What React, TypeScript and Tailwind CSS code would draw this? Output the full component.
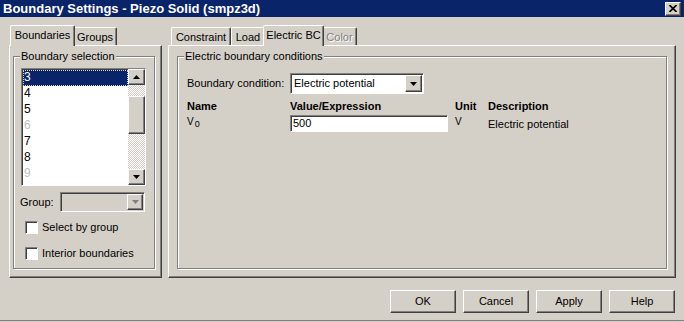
import React from 'react';

const raised =
  'border border-t-white border-l-white border-r-[#404040] border-b-[#404040] shadow-[inset_-1px_-1px_#808080] bg-[#d4d0c8]';
const sunken =
  'border border-t-[#808080] border-l-[#808080] border-r-white border-b-white shadow-[inset_1px_1px_#404040]';

const Down = () => (
  <svg width="7" height="4" viewBox="0 0 7 4">
    <polygon points="0,0 7,0 3.5,4" fill="#000" />
  </svg>
);

const Up = () => (
  <svg width="7" height="4" viewBox="0 0 7 4">
    <polygon points="0,4 7,4 3.5,0" fill="#000" />
  </svg>
);

const GroupBox: React.FC<{ label: string; className?: string; children?: React.ReactNode }> = ({
  label,
  className,
  children
}) => (
  <div
    className={`relative border border-[#808080] shadow-[inset_1px_1px_#fff,1px_1px_#fff] ${className ?? ''}`}
  >
    <span className="absolute -top-[8px] left-[6px] bg-[#d4d0c8] px-[1px] leading-[14px]">{label}</span>
    {children}
  </div>
);

const Tab: React.FC<{ label: string; width: string; active?: boolean; disabled?: boolean }> = ({
  label,
  width,
  active,
  disabled
}) => (
  <div
    className={`${width} flex items-center justify-center border-t border-l border-r border-t-white border-l-white border-r-[#404040] shadow-[inset_-1px_0_#808080] bg-[#d4d0c8] rounded-t-[2px] ${
      active ? 'relative z-10 h-[21px] -mb-[1px] -mx-[2px] pb-[2px]' : 'h-[18px] pt-[1px]'
    } ${disabled ? 'text-[#808080] [text-shadow:1px_1px_#fff]' : ''}`}
  >
    {label}
  </div>
);

const Checkbox: React.FC<{ label: string }> = ({ label }) => (
  <div className="flex items-center h-[13px]">
    <div className={`w-[13px] h-[13px] bg-white ${sunken}`} />
    <span className="ml-[4px]">{label}</span>
  </div>
);

const Button: React.FC<{ label: string }> = ({ label }) => (
  <div className={`w-[66px] h-[23px] flex items-center justify-center ${raised}`}>{label}</div>
);

const items = [
  { n: '3', sel: true },
  { n: '4' },
  { n: '5' },
  { n: '6', dim: true },
  { n: '7' },
  { n: '8' },
  { n: '9', dim: true }
];

export default function App() {
  return (
    <div className="w-[684px] h-[322px] bg-[#d4d0c8] text-[11px] text-black font-['Liberation_Sans',Arial,sans-serif] flex flex-col overflow-hidden">
      {/* title bar */}
      <div className="h-[17px] bg-[#0a246a] flex items-center justify-between pl-[3px] pr-[3px]">
        <span className="text-white font-bold text-[13px] leading-none">
          Boundary Settings - Piezo Solid (smpz3d)
        </span>
        <div className={`w-[16px] h-[14px] flex items-center justify-center ${raised}`}>
          <svg width="8" height="7" viewBox="0 0 8 7">
            <path d="M0.5 0 L7.5 7 M7.5 0 L0.5 7" stroke="#000" strokeWidth="1.6" />
          </svg>
        </div>
      </div>

      <div className="flex mt-[8px]">
        {/* left column */}
        <div className="ml-[9px] w-[153px] flex flex-col">
          <div className="h-[20px] flex items-end pl-[3px]">
            <Tab label="Boundaries" width="w-[65px]" active />
            <Tab label="Groups" width="w-[44px]" />
          </div>
          <div className={`h-[233px] pt-[10px] pl-[3px] pr-[6px] pb-[6px] ${raised}`}>
            <GroupBox label="Boundary selection" className="h-[213px] pt-[11px] pl-[7px]">
              <div className={`w-[125px] h-[118px] bg-white flex ${sunken}`}>
                <div className="flex-1 pt-[1px] pl-[1px] overflow-hidden">
                  {items.map((it) => (
                    <div
                      key={it.n}
                      className={`h-[16px] leading-[14px] pl-[1px] ${
                        it.sel
                          ? 'bg-[#0a246a] text-white outline-1 outline-dotted outline-[#d4d0c8] -outline-offset-1'
                          : it.dim
                          ? 'text-[#c0c0c0]'
                          : ''
                      } text-[12px]`}
                    >
                      {it.n}
                    </div>
                  ))}
                </div>
                <div className="w-[17px] flex flex-col bg-[repeating-conic-gradient(#ffffff_0%_25%,#d4d0c8_0%_50%)] bg-[length:2px_2px]">
                  <div className={`h-[16px] flex items-center justify-center ${raised}`}>
                    <Up />
                  </div>
                  <div className={`h-[38px] mt-[11px] ${raised}`} />
                  <div className="flex-1" />
                  <div className={`h-[16px] flex items-center justify-center ${raised}`}>
                    <Down />
                  </div>
                </div>
              </div>
              <div className="flex items-center mt-[6px] -ml-[1px]">
                <span className="w-[40px]">Group:</span>
                <div className={`w-[85px] h-[20px] bg-[#d4d0c8] flex justify-end p-[1px] ${sunken}`}>
                  <div className={`w-[16px] h-full flex items-center justify-center ${raised}`}>
                    <svg width="7" height="4" viewBox="0 0 7 4">
                      <polygon points="0,0 7,0 3.5,4" fill="#808080" />
                    </svg>
                  </div>
                </div>
              </div>
              <div className="mt-[9px] ml-[4px] flex flex-col gap-[13px]">
                <Checkbox label="Select by group" />
                <Checkbox label="Interior boundaries" />
              </div>
            </GroupBox>
          </div>
        </div>

        {/* right column */}
        <div className="ml-[6px] w-[508px] flex flex-col">
          <div className="h-[20px] flex items-end pl-[3px]">
            <Tab label="Constraint" width="w-[60px]" />
            <Tab label="Load" width="w-[34px]" />
            <Tab label="Electric BC" width="w-[61px]" active />
            <Tab label="Color" width="w-[35px]" disabled />
          </div>
          <div className={`h-[233px] pt-[10px] pl-[8px] pr-[8px] pb-[6px] ${raised}`}>
            <GroupBox label="Electric boundary conditions" className="h-[213px] pt-[16px] pl-[9px]">
              <div className="flex items-center">
                <span className="w-[103px]">Boundary condition:</span>
                <div className={`w-[134px] h-[21px] bg-white flex items-center p-[1px] ${sunken}`}>
                  <span className="flex-1 pl-[2px]">Electric potential</span>
                  <div className={`w-[17px] h-full flex items-center justify-center ${raised}`}>
                    <Down />
                  </div>
                </div>
              </div>
              <div className="flex items-center font-bold mt-[5px] h-[14px]">
                <span className="w-[103px]">Name</span>
                <span className="w-[165px]">Value/Expression</span>
                <span className="w-[33px]">Unit</span>
                <span>Description</span>
              </div>
              <div className="flex items-start mt-[2px]">
                <span className="w-[103px] text-[10px] leading-[10px] pt-[2px]">
                  V<sub className="text-[9px] relative top-[2px] ml-[1px]">0</sub>
                </span>
                <div className={`w-[158px] h-[17px] bg-white flex items-center pl-[2px] ${sunken}`}>500</div>
                <span className="ml-[7px] w-[33px] text-[10px] leading-[10px] pt-[2px]">V</span>
                <span className="pt-[1px]">Electric potential</span>
              </div>
            </GroupBox>
          </div>
        </div>
      </div>

      {/* buttons */}
      <div className="flex justify-end gap-[7px] pr-[9px] mt-[12px]">
        <Button label="OK" />
        <Button label="Cancel" />
        <Button label="Apply" />
        <Button label="Help" />
      </div>
      <div className="flex-1" />
      <div className="h-[1px] bg-[#808080] mb-[1px]" />
    </div>
  );
}
